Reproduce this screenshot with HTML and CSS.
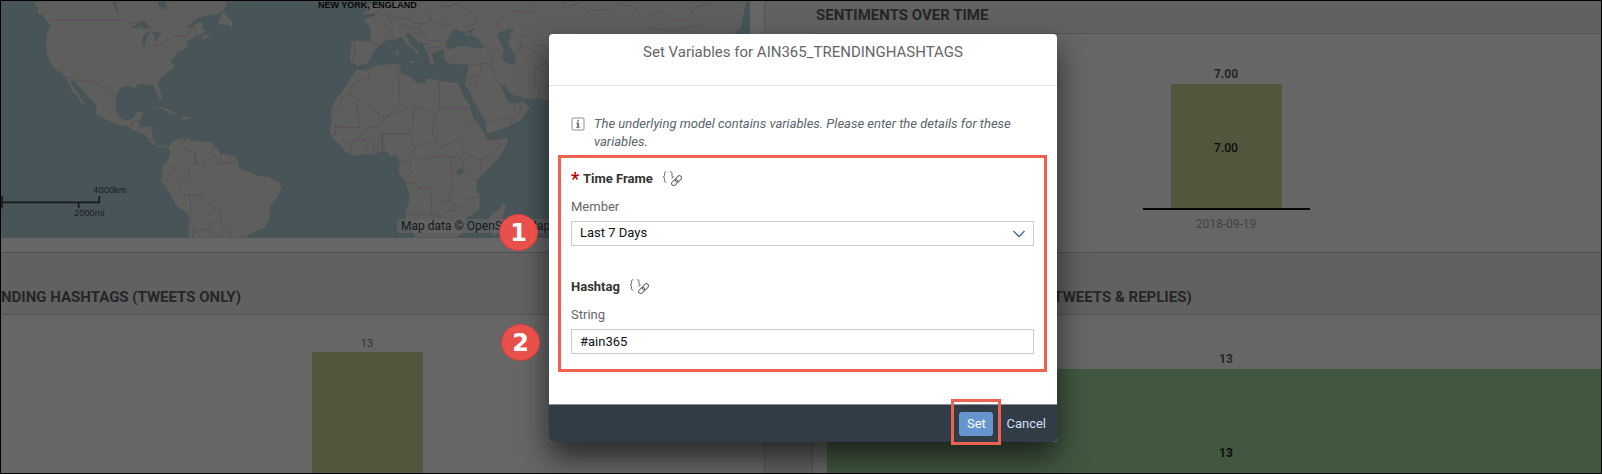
FILE: index.html
```html
<!DOCTYPE html>
<html lang="en">
<head>
<meta charset="utf-8">
<title>Set Variables</title>
<link rel="stylesheet" href="styles.css">
</head>
<body>
<div class="app">
  <main class="dashboard">
    <section class="panel map-panel">
      <div class="map">
        <svg class="map-svg" viewBox="0 0 2247 711" preserveAspectRatio="xMinYMin slice" aria-label="World map">
          <g class="land">
            <path d="M104,0 100,14 112,22 106,34 122,42 134,58 148,76 137,92 134,130 138,165 150,190 164,210 180,214 192,228 200,244 208,262 218,280 228,284 236,302 250,314 252,308 240,292 234,278 222,262 210,242 216,236 226,250 244,268 262,290 284,312 285,342 310,354 345,370 358,376 374,372 388,382 396,390 418,396 430,402 440,414 446,424 462,434 480,443 486,436 500,440 506,452 500,478 482,498 480,512 486,522 477,536 490,552 506,580 522,610 536,624 556,636 565,652 562,690 562,711 735,711 745,700 765,690 792,682 804,660 810,612 826,594 842,564 838,546 805,527 770,524 750,512 716,502 712,478 702,462 660,458 654,446 640,434 634,422 600,420 575,418 560,408 548,424 552,406 530,412 510,422 503,436 490,430 480,434 464,428 456,414 454,400 458,380 440,375 418,378 416,362 428,340 424,330 405,334 398,350 376,358 358,350 346,330 346,300 350,276 364,258 384,256 394,262 405,260 412,252 432,250 442,256 456,252 464,270 470,288 480,298 484,288 476,262 472,244 482,230 500,214 516,206 520,192 510,180 520,172 528,156 548,146 560,138 558,124 572,114 590,108 608,96 620,90 606,84 608,64 590,64 566,82 560,78 574,66 590,52 622,44 650,40 668,28 677,16 677,0Z"/>
            <path d="M598,116 606,102 622,98 634,96 622,108 610,116Z M648,70 668,28 678,46 690,54 696,68 694,80 684,74 668,72Z M448,322 470,315 496,320 524,336 528,342 506,340 492,328 470,320 452,324Z M540,346 556,344 576,351 568,354 550,357 542,354Z M500,354 512,356 505,358Z M584,355 596,354 594,358Z"/>
          </g>
          <g class="water">
            <path d="M390,80 406,70 418,60 432,62 438,70 450,80 428,84 420,76 404,82Z M424,134 424,110 434,96 450,92 440,104 434,118 432,136Z M452,94 470,92 486,100 474,104 470,116 460,122 462,108Z M468,0 494,0 496,18 486,28 474,18Z M332,0 346,4 354,36 348,34 342,18Z M508,168 518,186 512,188Z"/>
          </g>
          <g class="borders">
            <path d="M148,56H366L384,66 412,68 440,76 458,92M460,138 492,126 500,116 522,104 558,104 564,92 578,78 584,90 584,102 596,104M192,228 212,232 224,238 262,240 272,236 290,250 302,262 318,256 330,274 346,292M388,380 398,362 416,358M402,392 412,386 418,372M426,400 436,390 458,382M440,414 454,416M548,408 538,424 548,442 566,448 582,456 582,488 566,492 564,520 522,504 496,492M478,536 496,538 508,520 522,506M566,520 564,536 544,542 534,560 546,580 566,582 570,604 566,644 574,660 580,688 574,711M582,458 586,490 608,492 614,476 636,470 632,456 640,436M640,462 652,492 664,486 658,466 664,458M664,488 700,486 708,474M690,458 688,486M566,584 598,582 608,602 636,612 642,632 658,634 662,660 630,662 622,684 580,688M622,684 658,708M660,662 666,682 690,698 690,711"/>
          </g>
          <g transform="translate(840 0)">
            <g class="land">
              <path d="M232,204 258,205 280,196 310,190 345,188 362,190 358,206 364,218 386,226 404,242 432,248 436,234 450,232 475,240 500,242 520,243 532,244 536,258 552,290 566,310 574,340 590,368 604,386 618,408 618,416 642,416 682,408 676,436 650,476 620,506 600,524 588,540 588,566 598,590 598,622 580,638 560,648 550,662 550,690 530,711 400,711 394,690 376,662 370,640 384,600 382,572 370,540 350,512 356,486 346,462 330,468 318,454 304,450 280,462 252,460 215,466 194,454 176,432 160,418 148,402 144,386 152,360 147,328 162,296 182,272 204,236 222,210Z"/>
              <path d="M306,0 296,22 280,44 262,48 244,60 262,70 268,90 266,122 234,118 210,120 208,144 205,168 208,186 224,190 232,196 256,190 270,176 276,156 290,140 302,130 308,122 330,118 342,118 358,108 366,114 378,132 398,148 406,156 402,176 408,172 412,156 416,152 396,136 386,124 376,102 382,96 394,108 412,124 428,132 434,150 440,166 448,190 462,192 458,176 452,158 466,154 484,146 490,150 486,166 492,184 506,188 530,192 552,190 562,194 556,226 550,246 560,266 574,294 592,328 610,356 618,400 664,384 690,374 720,358 736,338 748,318 732,306 722,294 716,304 700,306 682,304 676,284 658,252 672,256 682,272 698,284 718,288 728,294 754,296 770,294 800,298 1110,298 1330,130 1356,102 1382,78 1388,40 1400,0Z"/>
              <path d="M240,42 256,28 262,10 300,8 298,22 284,40 258,40Z M376,182 398,176 396,190Z M343,146 352,144 354,164 344,166Z M346,130 352,130 350,142Z M466,206 484,206 476,210Z M534,206 548,200 544,208Z M624,652 636,634 656,622 668,600 676,620 666,650 650,702 636,711 628,690 630,664Z"/>
            </g>
            <g class="water">
              <path d="M496,140 500,116 514,90 526,84 536,92 550,90 556,104 572,102 592,116 606,132 606,142 580,142 556,134 530,136 508,146Z M554,92 576,82 584,80 568,96Z M648,106 652,96 670,90 680,82 698,84 694,96 684,100 690,112 680,120 688,140 700,156 704,186 690,190 670,182 664,168 668,150 662,130 654,116Z M528,506 540,500 548,506 542,520 530,522Z M548,248 546,272 538,262 542,246Z"/>
            </g>
            <g class="borders">
              <path d="M262,206 266,228 242,234 208,258 210,280 182,290 180,306 164,328 147,328M208,280 310,348 398,312 462,340 474,324 474,240M474,322H566M352,190 346,214 356,246 354,296 370,316M228,300 234,380 152,378M310,348 304,374 256,380 234,412 216,416M400,316 396,372 386,398 304,398 310,450M464,342 454,398 466,422 400,440 392,460 356,484M386,400 398,436M466,422 484,436 520,420 540,428 544,404 560,378 568,362 588,366M476,434 500,466 540,472 550,452 540,430M560,462 592,474 624,464 660,430 610,406M540,472 550,500 546,512 590,540M602,474 600,510M396,464 416,474 504,464 514,510 512,534 520,560 510,570 502,600 536,620 552,608 560,592 598,590M374,546H402L414,562 446,560 452,590 450,640 370,640M452,590 474,602 502,600M450,640 476,646 500,630 536,624M412,642V680M448,662 470,680 500,662 520,650M254,414 256,460M278,414V460M292,414 290,452M302,400V450M180,418 210,432 212,462M148,400 164,402 162,372M214,434 218,420 254,416M354,486 388,488 392,510 372,540"/>
              <path d="M210,132 224,134 216,184M266,124 300,130M300,22 330,60 336,78 328,92 338,114M300,44 324,42 324,20 336,0M324,40 352,50 380,52 400,66 420,68 448,62M352,72 380,76 412,84 420,68M400,30 380,48M412,28 446,40 450,60 480,68 510,72 516,90M450,30 470,14 500,18 528,8 560,26 590,50 590,64 552,82M410,84 430,100 440,120 460,118 500,124M396,96 426,102M424,108 420,126 440,128 444,152M444,140 480,138M556,194 610,186 630,190 632,172 620,146 606,134M626,148 644,152M630,190 640,220 656,252M604,190 600,218 560,238 574,256 596,224M634,136 660,150M646,68 670,40 700,30 760,34 764,10M646,68 664,86M704,152 730,136 760,150 780,170 800,180M720,140 722,100 738,104 764,130 790,136 807,150M760,198 762,250 776,268 770,292M760,206 800,180M616,364 664,352 694,352 720,330 716,306M694,352 690,372M840,0 860,16 890,8 920,30 980,26 1010,6 1060,18 1090,60M1110,40 1150,30 1170,54 1220,60 1240,20 1290,6M1100,80 1180,90 1260,70"/>
            </g>
          </g>
          <g class="scale">
            <path d="M3,586V622M3,604H295V586M233,604V622"/>
            <text x="277" y="576">4000km</text>
            <text x="219" y="645">2000mi</text>
          </g>
        </svg>
        <span class="map-place">NEW YORK, ENGLAND</span>
        <span class="map-credit">Map data © OpenStreetMap</span>
      </div>
    </section>

    <section class="panel right-panel">
      <h2 class="panel-title panel-title-short">SENTIMENTS OVER TIME</h2>
      <div class="chart sentiments">
        <span class="value">7.00</span>
        <div class="axis"><div class="bar olive tall">7.00</div></div>
        <span class="category">2018-09-19</span>
      </div>
    </section>

    <section class="panel lower left-panel">
      <h2 class="panel-title">NDING HASHTAGS (TWEETS ONLY)</h2>
      <div class="chart hashtags">
        <span class="value value-small">13</span>
        <div class="bar olive fill"></div>
      </div>
    </section>

    <section class="panel lower right-panel">
      <h2 class="panel-title panel-title-inset">(TWEETS &amp; REPLIES)</h2>
      <div class="chart replies">
        <span class="value">13</span>
        <div class="bar green fill">13</div>
      </div>
    </section>
  </main>

  <div class="overlay">
    <form class="dialog" role="dialog" aria-labelledby="dialog-title">
      <header class="dialog-header"><h1 class="dialog-title" id="dialog-title">Set Variables for AIN365_TRENDINGHASHTAGS</h1></header>
      <div class="dialog-body">
        <p class="info">
          <svg class="info-icon" viewBox="0 0 14 14"><rect x="1" y="1" width="12" height="12" rx="1" fill="none" stroke="#8a9299"/><path d="M6.2 3.2h1.7v1.5H6.2zM5.3 5.8h2.6v4h.9v1H5.2v-1h1V6.8h-.9z" fill="#5a646c"/></svg>
          <span>The underlying model contains variables. Please enter the details for these variables.</span>
        </p>
        <div class="highlight">
          <div class="variable">
            <h3 class="variable-name"><span class="required">*</span><span>Time Frame</span>
              <svg class="link-icon" viewBox="0 0 20 16"><g fill="none" stroke="#666" stroke-linecap="round"><path d="M4 .8C2.600.8 2.500 1.500 2.500 2.500v2c0 1-.5 1.500-1.500 1.500 1 0 1.500.5 1.500 1.500v2c0 1 .1 1.700 1.500 1.700M8.500.8C9.900.8 10 1.500 10 2.500v2c0 1 .4 1.500 1.400 1.500-.8 0-1.200.4-1.400 1.200"/><rect x="9.200" y="9.400" width="7" height="4.200" rx="2.100" transform="rotate(-45 12.700 11.500)"/><rect x="12.900" y="5.700" width="7" height="4.200" rx="2.100" transform="rotate(-45 16.400 7.800)"/></g></svg>
            </h3>
            <label class="field-label" for="member">Member</label>
            <div class="select-wrap">
              <select class="field select" id="member"><option>Last 7 Days</option></select>
              <svg class="chevron" viewBox="0 0 12 8"><path d="M.5 1 6 6.500 11.500 1" fill="none" stroke="#4a6f9c" stroke-width="1.500"/></svg>
            </div>
          </div>
          <div class="variable">
            <h3 class="variable-name"><span>Hashtag</span>
              <svg class="link-icon" viewBox="0 0 20 16"><g fill="none" stroke="#666" stroke-linecap="round"><path d="M4 .8C2.600.8 2.500 1.500 2.500 2.500v2c0 1-.5 1.500-1.500 1.500 1 0 1.500.5 1.500 1.500v2c0 1 .1 1.700 1.500 1.700M8.500.8C9.900.8 10 1.500 10 2.500v2c0 1 .4 1.500 1.400 1.500-.8 0-1.200.4-1.400 1.200"/><rect x="9.200" y="9.400" width="7" height="4.200" rx="2.100" transform="rotate(-45 12.700 11.500)"/><rect x="12.900" y="5.700" width="7" height="4.200" rx="2.100" transform="rotate(-45 16.400 7.800)"/></g></svg>
            </h3>
            <label class="field-label" for="string">String</label>
            <input class="field" id="string" type="text" value="#ain365">
          </div>
        </div>
      </div>
      <footer class="dialog-footer">
        <span class="set-wrap"><button class="button primary" type="button">Set</button><span class="set-frame"></span></span>
        <button class="button plain" type="button">Cancel</button>
      </footer>
      <span class="step step-one">1</span>
      <span class="step step-two">2</span>
    </form>
  </div>
</div>
</body>
</html>
```
FILE: styles.css
```css
* {
  box-sizing: border-box;
}

body {
  margin: 0;
  font-family: Roboto, "Liberation Sans", sans-serif;
  font-size: 13px;
  color: #333;
}

h1,
h2,
h3,
p {
  margin: 0;
}

.app {
  position: relative;
  display: flex;
  min-height: 100vh;
  border: 1px solid #000;
  overflow: hidden;
  background: #616161;
}

.dashboard {
  flex: 1;
  display: grid;
  grid-template-columns: 763fr 837fr;
  grid-template-rows: 252px 1fr;
}

.panel {
  display: flex;
  flex-direction: column;
  min-width: 0;
  border-bottom: 1px solid #515151;
}

.lower {
  border-bottom: 0;
}

.map-panel {
  padding-right: 14px;
  background: #666;
}

.right-panel {
  padding-left: 47px;
  border-left: 1px solid #545454;
}

.panel-title {
  height: 61px;
  padding-top: 34px;
  overflow: hidden;
  font-size: 15px;
  line-height: 20px;
  font-weight: 700;
  color: #252627;
  white-space: nowrap;
}

.right-panel .panel-title {
  padding-left: 4px;
}

.right-panel .panel-title-short {
  height: 32px;
  padding-top: 4px;
}

.right-panel .panel-title-inset {
  padding-left: 236px;
}

.chart {
  flex: 1;
  display: flex;
  flex-direction: column;
  align-items: center;
  border-top: 1px solid #545454;
  background: #666;
}

.right-panel .chart {
  border-left: 1px solid #545454;
}

.value {
  font-size: 12px;
  line-height: 16px;
  font-weight: 700;
  color: #262626;
}

.bar {
  display: flex;
  align-items: center;
  justify-content: center;
  width: 111px;
  font-size: 12px;
  font-weight: 700;
  color: #0c0d0a;
}

.olive {
  background: #51563d;
}

.green {
  width: 100%;
  background: #415740;
}

.fill {
  flex: 1;
}

.tall {
  height: 124px;
  padding-bottom: 4px;
  padding-top: 4px;
}

.sentiments {
  padding: 32px 0 0 38px;
}

.sentiments .value {
  margin-bottom: 2px;
}

.sentiments .tall {
  padding: 4px 0 0;
  font-weight: 500;
}

.axis {
  padding: 0 28px;
  border-bottom: 2px solid #050505;
}

.category {
  margin-top: 6px;
  font-size: 12px;
  line-height: 16px;
  color: #424242;
}

.hashtags {
  padding: 21px 31px 0 0;
}

.value-small {
  font-size: 11px;
  font-weight: 400;
  color: #26323a;
}

.replies {
  padding: 36px 0 0 14px;
}

.replies .value {
  padding-left: 24px;
  margin-bottom: 2px;
}

.replies .green {
  padding: 64px 0 0 24px;
}

.map {
  position: relative;
  height: 237px;
  overflow: hidden;
  background: #475559;
}

.map-svg {
  display: block;
  width: 100%;
  height: 100%;
}

.land {
  fill: #5e5e5c;
  stroke: #3d4c53;
  stroke-width: 1;
}

.water {
  fill: #475559;
}

.borders {
  fill: none;
  stroke: #5a4759;
  stroke-width: 2;
  stroke-linejoin: round;
}

.scale path {
  fill: none;
  stroke: #18191a;
  stroke-width: 5;
}

.scale text {
  font-family: "Liberation Sans", sans-serif;
  font-size: 28px;
  fill: #1c1e1f;
}

.map-place {
  position: absolute;
  top: -1px;
  left: 317px;
  font-family: "Liberation Sans", sans-serif;
  font-size: 9px;
  line-height: 10px;
  font-weight: 700;
  color: #070707;
}

.map-credit {
  position: absolute;
  top: 218px;
  left: 396px;
  padding: 0 4px;
  font-size: 12px;
  line-height: 14px;
  background: rgba(102, 102, 102, 0.6);
  color: #16181a;
}

.overlay {
  position: absolute;
  inset: 0;
  display: flex;
  align-items: flex-start;
  justify-content: center;
  padding: 33px 0 0 4px;
}

.dialog {
  position: relative;
  width: 508px;
  border-radius: 4px;
  background: #fff;
  box-shadow: 0 15px 30px rgba(0, 0, 0, 0.6);
}

.dialog-header {
  height: 52px;
  padding-top: 8px;
  border-bottom: 1px solid #e5e5e5;
}

.dialog-title {
  font-size: 15px;
  line-height: 20px;
  font-weight: 400;
  text-align: center;
  color: #666;
}

.dialog-body {
  padding: 29px 10px 32px 9px;
}

.info {
  display: flex;
  gap: 9px;
  padding: 0 13px 4px;
  font-size: 13px;
  line-height: 18px;
  font-style: italic;
  color: #5a646a;
}

.info-icon {
  flex: none;
  width: 14px;
  height: 14px;
  margin-top: 2px;
}

.highlight {
  display: flex;
  flex-direction: column;
  gap: 31px;
  padding: 11px 10px 15px;
  border: 3px solid #ed6351;
}

.variable {
  display: flex;
  flex-direction: column;
}

.variable-name {
  display: flex;
  align-items: center;
  height: 20px;
  margin-bottom: 9px;
  font-size: 13px;
  line-height: 20px;
  font-weight: 700;
  color: #333;
}

.required {
  width: 12px;
  font-size: 18px;
  color: #b00;
}

.link-icon {
  width: 20px;
  height: 16px;
  margin-left: 9px;
}

.field-label {
  margin-bottom: 5px;
  font-size: 13px;
  line-height: 18px;
  color: #666;
}

.select-wrap {
  position: relative;
  display: flex;
}

.field {
  width: 100%;
  height: 25px;
  padding: 0 8px;
  border: 1px solid #ccc;
  border-radius: 0;
  appearance: none;
  background: #fff;
  font-family: inherit;
  font-size: 13px;
  color: #111;
}

.select {
  padding-bottom: 2px;
}

.chevron {
  position: absolute;
  top: 9px;
  right: 9px;
  width: 12px;
  height: 8px;
  pointer-events: none;
}

.dialog-footer {
  display: flex;
  align-items: center;
  justify-content: flex-end;
  gap: 8px;
  height: 38px;
  padding-right: 6px;
  border-top: 1px solid #8a8d92;
  border-radius: 0 0 4px 4px;
  background: #323c47;
}

.set-wrap {
  position: relative;
  display: flex;
}

.set-frame {
  position: absolute;
  inset: -13px -8px -9px;
  border: 3px solid #ed6351;
  pointer-events: none;
}

.button {
  height: 24px;
  border: 0;
  border-radius: 3px;
  font-family: inherit;
  font-size: 13px;
}

.primary {
  width: 34px;
  padding: 0;
  background: #6496cd;
  color: #fff;
}

.plain {
  padding: 0 5px;
  background: transparent;
  color: #cfe0f3;
}

.step {
  position: absolute;
  display: flex;
  align-items: center;
  justify-content: center;
  width: 39px;
  height: 37px;
  border: 1px solid #c9433f;
  border-radius: 50%;
  background: #e9504b;
  font-family: "DejaVu Sans", sans-serif;
  font-size: 24px;
  font-weight: 700;
  color: #fff;
}

.step-one {
  top: 180px;
  left: -50px;
}

.step-two {
  top: 290px;
  left: -48px;
}
```
